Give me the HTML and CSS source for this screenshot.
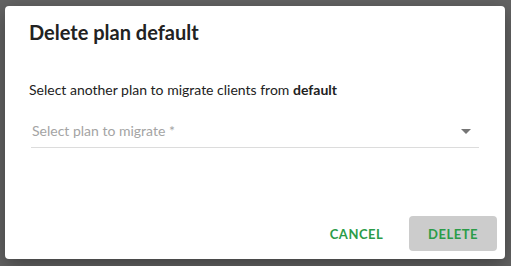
FILE: index.html
```html
<!DOCTYPE html>
<html lang="en">
<head>
    <meta charset="UTF-8">
    <title>Delete plan</title>
    <link rel="stylesheet" href="styles.css">
</head>
<body>
    <div class="backdrop">
        <div class="dialog">
            <h2 class="dialog-title">Delete plan default</h2>

            <div class="dialog-content">
                <p class="dialog-text">Select another plan to migrate clients from <strong>default</strong></p>

                <!-- plan select -->
                <div class="select-field">
                    <span class="select-placeholder">Select plan to migrate *</span>
                    <svg class="select-arrow" width="10" height="5" viewBox="0 0 10 5">
                        <path d="M0 0h10L5 5z" fill="#757575"/>
                    </svg>
                </div>
            </div>

            <div class="dialog-actions">
                <button class="btn btn-text">Cancel</button>
                <button class="btn btn-disabled">Delete</button>
            </div>
        </div>
    </div>
</body>
</html>
```

FILE: styles.css
```css
* {
    margin: 0;
    padding: 0;
    box-sizing: border-box;
}

body {
    font-family: "Lato", "Liberation Sans", sans-serif;
    color: #222;
    background: #636363;
}

.backdrop {
    width: 511px;
    height: 266px;
    padding: 6px 6px 7px 5px;
}

.dialog {
    width: 500px;
    height: 253px;
    background: #ffffff;
    border-radius: 4px;
    box-shadow: 0 6px 20px rgba(0, 0, 0, 0.35);
    display: flex;
    flex-direction: column;
}

.dialog-title {
    padding: 14px 24px 0 24px;
    font-size: 20px;
    font-weight: 700;
    line-height: 24px;
    color: #222;
}

.dialog-content {
    padding: 0 24px;
    flex: 1;
}

.dialog-text {
    margin-top: 37px;
    font-size: 14px;
    line-height: 18px;
    color: #222;
}

.dialog-text strong {
    font-weight: 700;
}

/* select */
.select-field {
    margin: 23px 2px 0 2px;
    height: 26px;
    border-bottom: 1px solid #dcdcdc;
    display: flex;
    align-items: flex-start;
    justify-content: space-between;
    padding: 0 2px 0 1px;
}

.select-placeholder {
    font-size: 14px;
    line-height: 18px;
    color: #a4a4a4;
}

.select-arrow {
    margin-top: 7px;
    margin-right: 6px;
}

.dialog-actions {
    display: flex;
    justify-content: flex-end;
    align-items: center;
    gap: 12px;
    padding: 0 8px 8px 0;
}

.btn {
    font-family: inherit;
    font-size: 13px;
    font-weight: 700;
    text-transform: uppercase;
    letter-spacing: 0.5px;
    color: #2b9c48;
    border: none;
    border-radius: 4px;
    background: transparent;
    height: 35px;
}

.btn-text {
    width: 81px;
}

.btn-disabled {
    width: 88px;
    background: #cccccc;
}
```
